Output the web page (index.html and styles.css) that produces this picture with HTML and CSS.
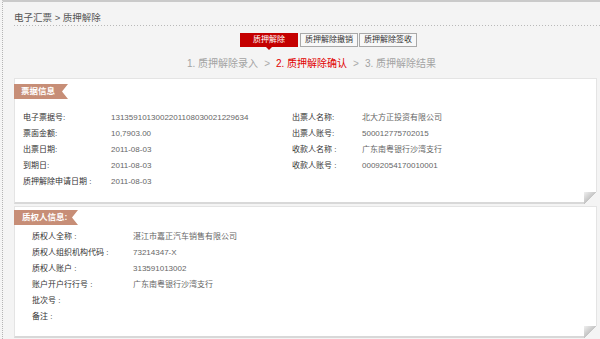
FILE: index.html
```html
<!DOCTYPE html>
<html lang="zh-CN">
<head>
<meta charset="UTF-8">
<meta name="viewport" content="width=device-width, initial-scale=1.0">
<title>质押解除</title>
<link rel="stylesheet" href="styles.css">
</head>
<body>
<div class="page">
    <div class="crumb">电子汇票 &gt; 质押解除</div>

    <div class="tabs">
        <span class="tab active">质押解除</span>
        <span class="tab">质押解除撤销</span>
        <span class="tab">质押解除签收</span>
    </div>

    <div class="steps">
        <span>1. 质押解除录入</span><span class="sep">&gt;</span><span class="cur">2. 质押解除确认</span><span class="sep">&gt;</span><span>3. 质押解除结果</span>
    </div>

    <!-- bill info -->
    <div class="card card-bill">
        <div class="ribbon">票据信息</div>
        <div class="cols">
            <div class="col col-left">
                <div class="row"><span class="lbl">电子票据号:</span><span class="val">1313591013002201108030021229634</span></div>
                <div class="row"><span class="lbl">票面金额:</span><span class="val">10,7903.00</span></div>
                <div class="row"><span class="lbl">出票日期:</span><span class="val">2011-08-03</span></div>
                <div class="row"><span class="lbl">到期日:</span><span class="val">2011-08-03</span></div>
                <div class="row"><span class="lbl">质押解除申请日期 :</span><span class="val">2011-08-03</span></div>
            </div>
            <div class="col col-right">
                <div class="row"><span class="lbl">出票人名称:</span><span class="val">北大方正投资有限公司</span></div>
                <div class="row"><span class="lbl">出票人账号:</span><span class="val">500012775702015</span></div>
                <div class="row"><span class="lbl">收款人名称 :</span><span class="val">广东南粤银行沙湾支行</span></div>
                <div class="row"><span class="lbl">收款人账号 :</span><span class="val">00092054170010001</span></div>
            </div>
        </div>
    </div>

    <!-- pledgee info -->
    <div class="card card-pledgee">
        <div class="ribbon">质权人信息:</div>
        <div class="col col-pledgee">
            <div class="row"><span class="lbl">质权人全称 :</span><span class="val">湛江市嘉正汽车销售有限公司</span></div>
            <div class="row"><span class="lbl">质权人组织机构代码 :</span><span class="val">73214347-X</span></div>
            <div class="row"><span class="lbl">质权人账户 :</span><span class="val">313591013002</span></div>
            <div class="row"><span class="lbl">账户开户行行号 :</span><span class="val">广东南粤银行沙湾支行</span></div>
            <div class="row"><span class="lbl">批次号 :</span><span class="val"></span></div>
            <div class="row"><span class="lbl">备注 :</span><span class="val"></span></div>
        </div>
    </div>
</div>
</body>
</html>
```

FILE: styles.css
```css
body {
    margin: 0;
    background-color: #f4f4f4;
    font-family: "Liberation Sans", "Noto Sans CJK SC", sans-serif;
}
.page {
    margin-left: 2px;
    border-top: 2px solid #cacaca;
    border-left: 1px dotted #b5b5b5;
    padding: 0 3px 0 11px;
    height: 337px;
    overflow: hidden;
}
.crumb {
    margin-top: 10px;
    margin-right: -3px;
    padding-bottom: 2px;
    line-height: 12px;
    font-size: 9.5px;
    color: #555;
    background: linear-gradient(to right, #b9b9b9 1px, transparent 1px) repeat-x left bottom / 3px 1px;
}
.tabs {
    display: flex;
    margin-top: 7px;
    padding-left: 226px;
}
.tab {
    height: 12px;
    line-height: 12px;
    font-size: 8px;
    color: #333;
    background-color: #f8f8f8;
    border: 1px solid #a9a9a9;
    padding: 0 4px;
    margin-right: 1px;
}
.tab.active {
    position: relative;
    color: #fff;
    background-color: #c40000;
    border-color: #c40000;
    padding: 0 12px;
    margin-right: 2px;
}
.tab.active::after {
    content: "";
    position: absolute;
    left: 50%;
    bottom: -4px;
    margin-left: -3px;
    border-top: 3px solid #c40000;
    border-left: 3px solid transparent;
    border-right: 3px solid transparent;
}
.steps {
    margin-top: 10px;
    padding-left: 173px;
    line-height: 14px;
    font-size: 10px;
    color: #a3a3a3;
}
.steps .sep {
    margin: 0 6px;
    color: #aaa;
}
.steps .cur {
    color: #e10000;
}
.card {
    position: relative;
    background-color: #fff;
    border: 1px solid #e4e4e4;
    border-bottom: 2px solid #d8d8d8;
}
.card::after {
    content: "";
    position: absolute;
    right: -1px;
    bottom: -2px;
    width: 13px;
    height: 12px;
    background: linear-gradient(to top left, #f4f4f4 50%, #c4c4c4 50%, #f0f0f0 100%);
}
.card-bill {
    margin-top: 7px;
    padding-bottom: 12px;
}
.card-pledgee {
    margin-top: 2px;
    padding-bottom: 11px;
}
.ribbon {
    margin-left: -1px;
    height: 15px;
    line-height: 15px;
    padding-left: 7px;
    font-size: 8.5px;
    font-weight: bold;
    color: #fff;
    background-color: #c78e77;
    clip-path: polygon(0 0, 100% 0, calc(100% - 6px) 50%, 100% 100%, 0 100%);
}
.card-bill .ribbon {
    margin-top: 5px;
    width: 47px;
}
.card-pledgee .ribbon {
    margin-top: 3px;
    width: 56px;
    padding-left: 8px;
}
.cols {
    display: flex;
    margin-top: 11px;
}
.row {
    display: flex;
    height: 16px;
    line-height: 16px;
    font-size: 8px;
}
.lbl {
    color: #333;
}
.val {
    color: #666;
}
.col-left {
    width: 269px;
    padding-left: 8px;
}
.col-left .lbl {
    width: 88px;
}
.col-right .lbl {
    width: 70px;
}
.col-pledgee {
    margin-top: 4px;
    padding-left: 17px;
}
.col-pledgee .lbl {
    width: 101px;
}
```
